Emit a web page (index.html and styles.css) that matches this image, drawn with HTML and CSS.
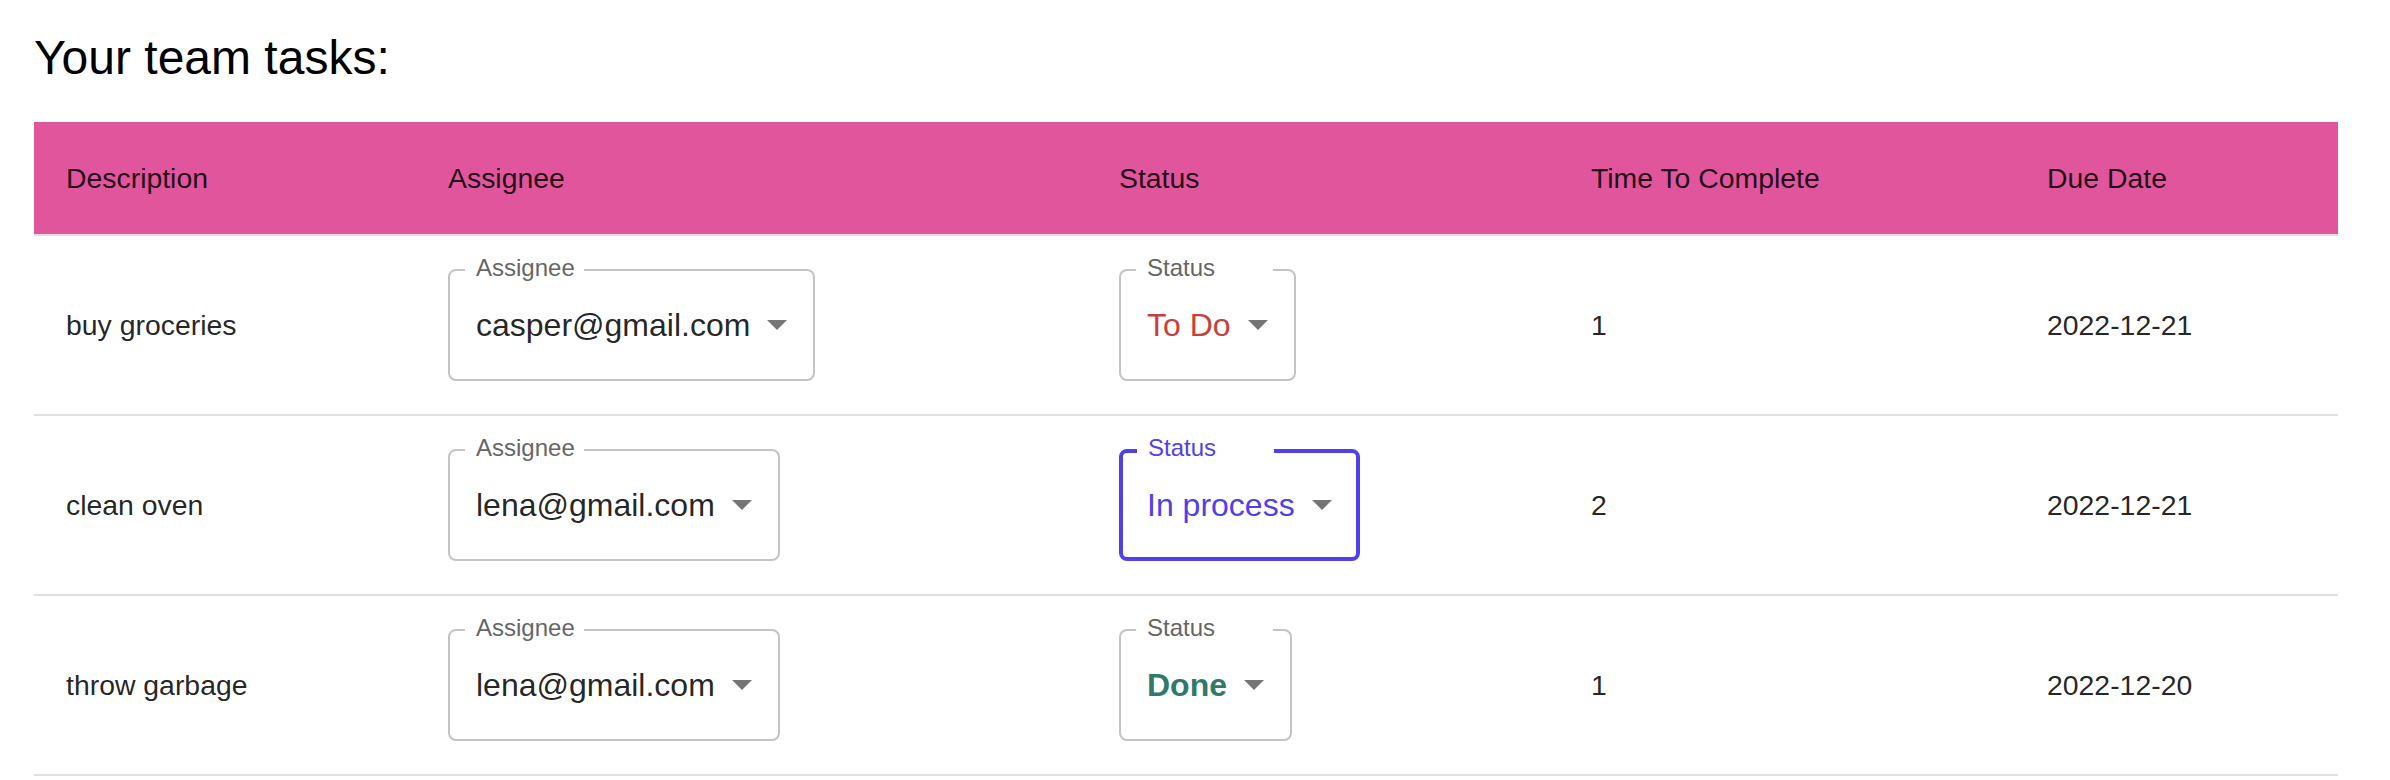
FILE: index.html
```html
<!DOCTYPE html>
<html lang="en">
<head>
<meta charset="utf-8">
<title>Your team tasks</title>
<link rel="stylesheet" href="styles.css">
</head>
<body>
<main class="page">
  <h1 class="title">Your team tasks:</h1>
  <table class="tasks">
    <colgroup>
      <col class="c-desc">
      <col class="c-assignee">
      <col class="c-status">
      <col class="c-time">
      <col class="c-due">
    </colgroup>
    <thead>
      <tr>
        <th>Description</th>
        <th>Assignee</th>
        <th>Status</th>
        <th>Time To Complete</th>
        <th>Due Date</th>
      </tr>
    </thead>
    <tbody>
      <tr>
        <td>buy groceries</td>
        <td>
          <div class="select">
            <span class="select-label">Assignee</span>
            <span class="select-value">casper@gmail.com</span>
            <svg class="select-arrow" viewBox="7 10 10 5"><path d="M7 10l5 5 5-5z"/></svg>
          </div>
        </td>
        <td>
          <div class="select">
            <span class="select-label label-status">Status</span>
            <span class="select-value status-todo">To Do</span>
            <svg class="select-arrow" viewBox="7 10 10 5"><path d="M7 10l5 5 5-5z"/></svg>
          </div>
        </td>
        <td>1</td>
        <td>2022-12-21</td>
      </tr>
      <tr>
        <td>clean oven</td>
        <td>
          <div class="select">
            <span class="select-label">Assignee</span>
            <span class="select-value">lena@gmail.com</span>
            <svg class="select-arrow" viewBox="7 10 10 5"><path d="M7 10l5 5 5-5z"/></svg>
          </div>
        </td>
        <td>
          <div class="select select-focused">
            <span class="select-label label-status">Status</span>
            <span class="select-value status-process">In process</span>
            <svg class="select-arrow" viewBox="7 10 10 5"><path d="M7 10l5 5 5-5z"/></svg>
          </div>
        </td>
        <td>2</td>
        <td>2022-12-21</td>
      </tr>
      <tr>
        <td>throw garbage</td>
        <td>
          <div class="select">
            <span class="select-label">Assignee</span>
            <span class="select-value">lena@gmail.com</span>
            <svg class="select-arrow" viewBox="7 10 10 5"><path d="M7 10l5 5 5-5z"/></svg>
          </div>
        </td>
        <td>
          <div class="select">
            <span class="select-label label-status">Status</span>
            <span class="select-value status-done">Done</span>
            <svg class="select-arrow" viewBox="7 10 10 5"><path d="M7 10l5 5 5-5z"/></svg>
          </div>
        </td>
        <td>1</td>
        <td>2022-12-20</td>
      </tr>
    </tbody>
  </table>
</main>
</body>
</html>
```
FILE: styles.css
```css
html, body {
  margin: 0;
  padding: 0;
  background: #ffffff;
}

body {
  font-family: "Liberation Sans", Arial, Helvetica, sans-serif;
  color: rgba(0, 0, 0, 0.87);
}

.page {
  padding: 0 0 0 34px;
}

.title {
  margin: 31px 0 37px;
  font-size: 48px;
  line-height: 54px;
  font-weight: 400;
  color: #000000;
}

.tasks {
  width: 2304px;
  table-layout: fixed;
  border-collapse: separate;
  border-spacing: 0;
}

.c-desc { width: 382px; }
.c-assignee { width: 671px; }
.c-status { width: 472px; }
.c-time { width: 456px; }
.c-due { width: 323px; }

.tasks thead tr {
  height: 114px;
}

.tasks th {
  background: #e1559c;
  padding: 0 32px;
  text-align: left;
  font-weight: 400;
  font-size: 28.4px;
  line-height: 32px;
  color: rgba(0, 0, 0, 0.87);
  border-bottom: 2px solid #e0e0e0;
  vertical-align: middle;
}

.tasks tbody tr {
  height: 180px;
}

.tasks td {
  padding: 0 32px;
  font-size: 28.4px;
  line-height: 32px;
  color: rgba(0, 0, 0, 0.87);
  border-bottom: 2px solid #e0e0e0;
  vertical-align: middle;
}

.select {
  position: relative;
  display: flex;
  align-items: center;
  width: max-content;
  height: 112px;
  box-sizing: border-box;
  border: 2px solid #c4c4c4;
  border-radius: 8px;
  padding: 0 26px;
  background: #ffffff;
}

.select-label {
  position: absolute;
  top: -15px;
  left: 15px;
  padding: 0 9px 0 11px;
  background: #ffffff;
  font-size: 24px;
  line-height: 24px;
  color: #666666;
  white-space: nowrap;
}

.label-status {
  min-width: 137px;
  box-sizing: border-box;
}

.select-value {
  font-size: 32px;
  line-height: 36px;
  color: rgba(0, 0, 0, 0.87);
  white-space: nowrap;
}

.select-arrow {
  width: 20px;
  height: 10px;
  margin-left: 17px;
  fill: #757575;
  flex: none;
}

.select-focused {
  border: 4px solid #5040ec;
  padding: 0 24px;
}

.select-focused .select-label {
  top: -17px;
  left: 14px;
  color: #5040ec;
}

.status-todo {
  color: #c9403b;
}

.status-process {
  color: #5040ec;
}

.status-done {
  color: #32796a;
  font-weight: 700;
}
```
